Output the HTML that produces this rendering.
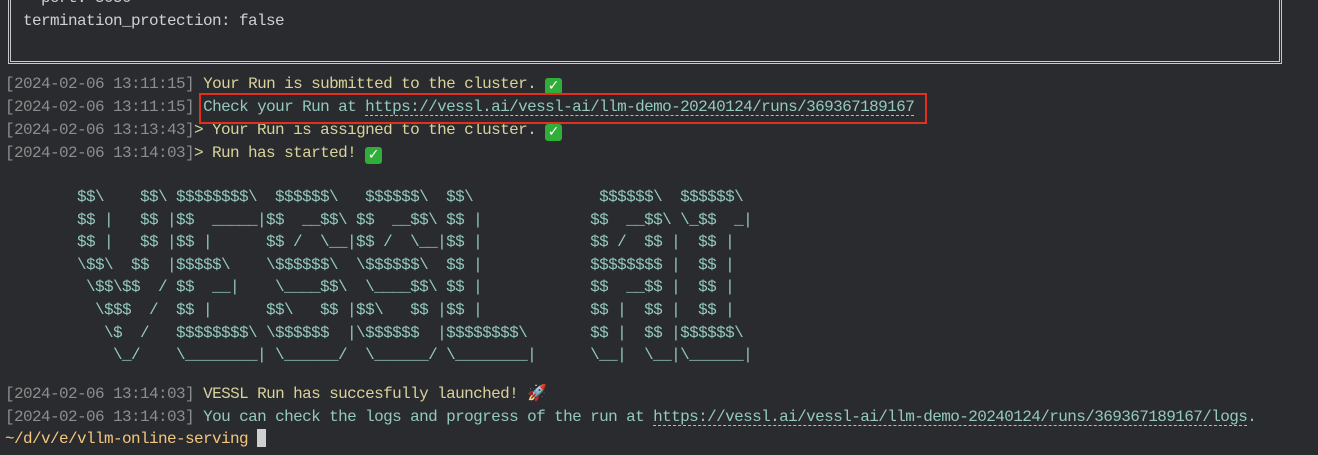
<!DOCTYPE html>
<html><head><meta charset="utf-8"><style>
html,body{margin:0;padding:0;background:#2a2b2f;width:1318px;height:455px;overflow:hidden}
body{font-family:"Liberation Mono","DejaVu Sans Mono",monospace;font-size:16px;letter-spacing:-0.6px;color:#d0d0d0;position:relative}
.l{position:absolute;left:5px;white-space:pre;line-height:22px;height:22px}
.t{color:#8d8d8d}.y{color:#d8d39a}.c{color:#93c9bf}.o{color:#f3c77c}
.u{text-decoration:underline dashed;text-decoration-thickness:1px;text-underline-offset:4px}
.ck{display:inline-block;width:17px;height:17px;background:#2fae3a;border-radius:3px;color:#fff;font-size:14px;line-height:17px;text-align:center;vertical-align:-2px;font-family:"DejaVu Sans",sans-serif;font-weight:bold;letter-spacing:0}
#box{position:absolute;left:8px;top:-10px;width:1268px;height:71px;border:3px double #c8c8c8;border-top:none}
#red{position:absolute;left:199px;top:93px;width:724px;height:27px;border:2px solid #e2301f}
#cur{position:absolute;left:257px;top:429px;width:9px;height:18px;background:#d0d0d0}
</style></head><body>
<div id="box"></div>
<div class="l" style="top:-13px;left:23px">  port: 5050</div>
<div class="l" style="top:10px;left:23px">termination_protection: false</div>
<div class="l" style="top:73px"><span class="t">[2024-02-06 13:11:15]</span> <span class="y">Your Run is submitted to the cluster. <span class="ck">✓</span></span></div>
<div class="l" style="top:96px"><span class="t">[2024-02-06 13:11:15]</span> <span class="c">Check your Run at <span class="u">https://vessl.ai/vessl-ai/llm-demo-20240124/runs/369367189167</span></span></div>
<div class="l" style="top:119px"><span class="t">[2024-02-06 13:13:43]</span><span class="y">&gt; Your Run is assigned to the cluster. <span class="ck">✓</span></span></div>
<div class="l" style="top:142px"><span class="t">[2024-02-06 13:14:03]</span><span class="y">&gt; Run has started! <span class="ck">✓</span></span></div>
<div class="l c" style="top:186px;line-height:22.6px;height:auto">        $$\    $$\ $$$$$$$$\  $$$$$$\   $$$$$$\  $$\              $$$$$$\  $$$$$$\
        $$ |   $$ |$$  _____|$$  __$$\ $$  __$$\ $$ |            $$  __$$\ \_$$  _|
        $$ |   $$ |$$ |      $$ /  \__|$$ /  \__|$$ |            $$ /  $$ |  $$ |
        \$$\  $$  |$$$$$\    \$$$$$$\  \$$$$$$\  $$ |            $$$$$$$$ |  $$ |
         \$$\$$  / $$  __|    \____$$\  \____$$\ $$ |            $$  __$$ |  $$ |
          \$$$  /  $$ |      $$\   $$ |$$\   $$ |$$ |            $$ |  $$ |  $$ |
           \$  /   $$$$$$$$\ \$$$$$$  |\$$$$$$  |$$$$$$$$\       $$ |  $$ |$$$$$$\
            \_/    \________| \______/  \______/ \________|      \__|  \__|\______|</div>
<div class="l" style="top:383px"><span class="t">[2024-02-06 13:14:03]</span> <span class="y">VESSL Run has succesfully launched! 🚀</span></div>
<div class="l" style="top:406px"><span class="t">[2024-02-06 13:14:03]</span> <span class="c">You can check the logs and progress of the run at <span class="u">https://vessl.ai/vessl-ai/llm-demo-20240124/runs/369367189167/logs</span>.</span></div>
<div class="l o" style="top:428px">~/d/v/e/vllm-online-serving</div>
<div id="cur"></div>
<div id="red"></div>
</body></html>
